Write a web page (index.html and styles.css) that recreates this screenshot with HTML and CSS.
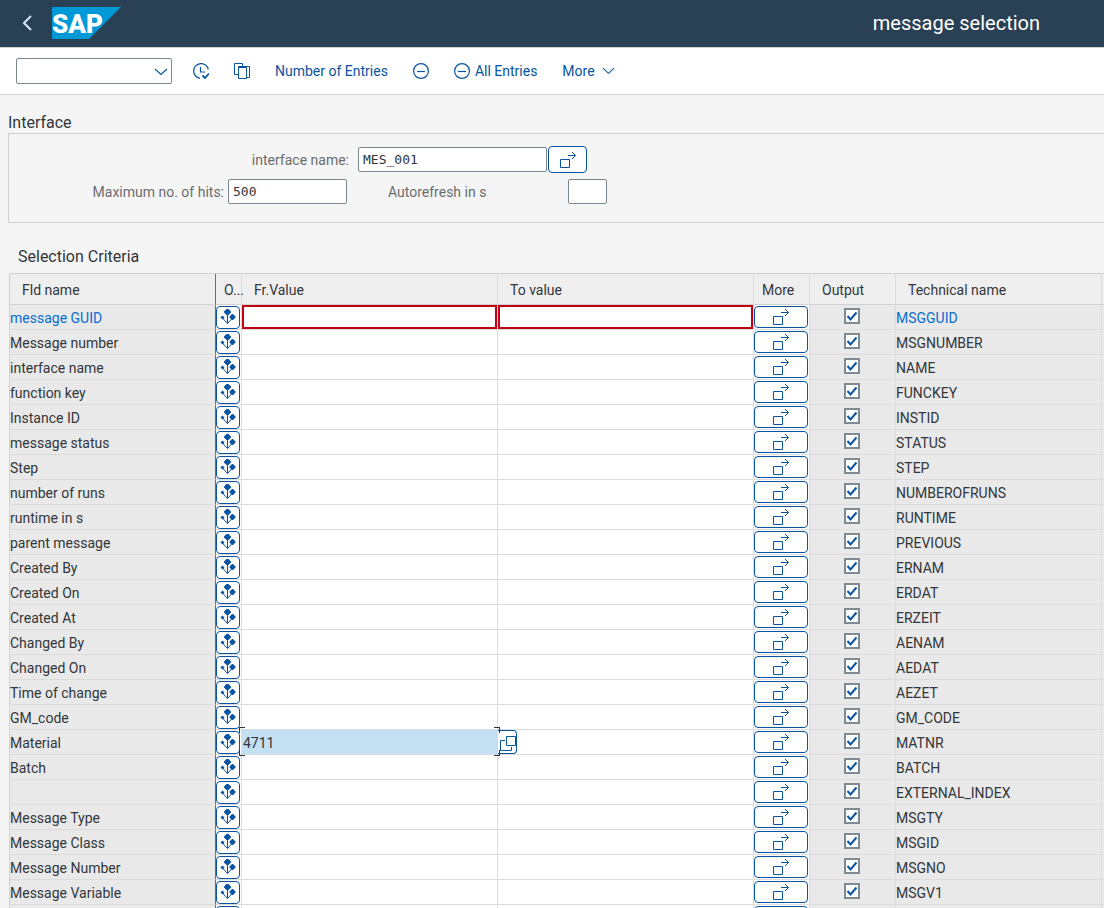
FILE: index.html
```html
<!DOCTYPE html>
<html lang="en">
<head>
    <meta charset="UTF-8">
    <meta name="viewport" content="width=device-width, initial-scale=1.0">
    <title>message selection</title>
    <link rel="stylesheet" href="styles.css">
</head>
<body>

    <!-- Shared icons -->
    <svg class="sprite" aria-hidden="true">
        <symbol id="icon-option" viewBox="0 0 16 16">
            <path d="M7.5 4v10.500M7.500 14.500L2.500 9M7.500 14.500l5-5.500" fill="none" stroke="currentColor"/>
            <path d="M6.500 0h2L11 2.500v1L8.500 6h-2L4 3.500v-1zM12 5h1l2.500 2.500v1L13 11h-1L9.500 8.500v-1zM2.500 6.500L4.500 8.500 2.500 10.500 .500 8.500z" fill="currentColor"/>
        </symbol>
        <symbol id="icon-multi" viewBox="0 0 18 18">
            <path d="M1.500 8.500h9v8h-9zM9 4.500h7.500M13 1l3.500 3.500L13 8" fill="none" stroke="currentColor"/>
        </symbol>
        <symbol id="icon-minus" viewBox="0 0 16 16">
            <circle cx="8" cy="8" r="7.400" fill="none" stroke="currentColor" stroke-width="1.200"/>
            <path d="M4 8.500h8" stroke="currentColor" stroke-width="1.200"/>
        </symbol>
        <symbol id="icon-down" viewBox="0 0 14 8">
            <path d="M1 1l6 5.500L13 1" fill="none" stroke="currentColor" stroke-width="1.100"/>
        </symbol>
    </svg>

    <!-- Shell Header -->
    <header class="shell">
        <button class="back-btn" aria-label="Back">
            <svg width="10" height="16" viewBox="0 0 10 16"><path d="M9 1L2 8l7 7" fill="none" stroke="currentColor" stroke-width="2"/></svg>
        </button>
        <svg class="logo" width="69" height="32" viewBox="0 0 69 32" role="img" aria-label="SAP">
            <path d="M0 0h69L37 32H0z" fill="#0099d8"/>
            <text class="logo-text" x="0" y="26">SAP</text>
        </svg>
        <h1>message selection</h1>
    </header>

    <!-- Toolbar -->
    <div class="toolbar">
        <div class="command">
            <select aria-label="Command"><option></option></select>
            <svg class="command-arrow" width="14" height="8"><use href="#icon-down"/></svg>
        </div>
        <button class="tool" aria-label="Execute">
            <svg width="16" height="16" viewBox="0 0 16 16" fill="none" stroke="currentColor" stroke-width="1.200">
                <path d="M15.300 6.500A7.400 7.400 0 1 0 7 15.300M7.500 4v5H12"/>
                <path d="M9.500 12.500l2.500 2.500 4-4.500" stroke-width="1.800"/>
            </svg>
        </button>
        <button class="tool" aria-label="Get Variant">
            <svg width="16" height="16" viewBox="0 0 16 16" fill="none" stroke="currentColor">
                <path d="M4 11.500H.500v-11h8V3M4.500 14.500V3.500h11v11H12"/>
                <path d="M4.500 4.500h8v11h-8z"/>
            </svg>
        </button>
        <button class="tool">Number of Entries</button>
        <button class="tool" aria-label="Collapse"><svg width="16" height="16"><use href="#icon-minus"/></svg></button>
        <button class="tool"><svg width="16" height="16"><use href="#icon-minus"/></svg>All Entries</button>
        <button class="tool">More<svg class="more-arrow" width="13" height="8"><use href="#icon-down"/></svg></button>
    </div>

    <main>
        <!-- Interface -->
        <section class="interface">
            <h2>Interface</h2>
            <div class="box">
                <div class="line">
                    <label class="label-name" for="iface">interface name:</label>
                    <input class="field-name" id="iface" type="text" value="MES_001">
                    <button class="btn pick" aria-label="Multiple selection"><svg width="18" height="18"><use href="#icon-multi"/></svg></button>
                </div>
                <div class="line">
                    <label class="label-hits" for="hits">Maximum no. of hits:</label>
                    <input class="field-hits" id="hits" type="text" value="500">
                    <label class="label-refresh" for="refresh">Autorefresh in s</label>
                    <input class="field-refresh" id="refresh" type="text">
                </div>
            </div>
        </section>

        <!-- Selection Criteria -->
        <section class="criteria">
            <h2>Selection Criteria</h2>
            <table>
                <colgroup>
                    <col class="col-name">
                    <col class="col-option">
                    <col>
                    <col>
                    <col class="col-more">
                    <col class="col-output">
                    <col class="col-tech">
                    <col class="col-end">
                </colgroup>
                <thead>
                    <tr>
                        <th>Fld name</th>
                        <th class="narrow">O...</th>
                        <th>Fr.Value</th>
                        <th>To value</th>
                        <th class="narrow">More</th>
                        <th>Output</th>
                        <th>Technical name</th>
                        <th></th>
                    </tr>
                </thead>
                <tbody id="rows"></tbody>
            </table>
        </section>
    </main>

    <script src="script.js"></script>
</body>
</html>
```

FILE: styles.css
```css
/* Global Styles */
* {
    margin: 0;
    padding: 0;
    box-sizing: border-box;
}

body {
    display: flex;
    flex-direction: column;
    height: 100vh;
    overflow: hidden;
    background: #f5f5f5;
    color: #32363a;
    font-family: Roboto, sans-serif;
    font-size: 14px;
}

button,
input,
select {
    font: inherit;
    color: inherit;
}

button {
    cursor: pointer;
}

.sprite {
    position: absolute;
    width: 0;
    height: 0;
}

/* Shell Header */
.shell {
    display: flex;
    flex: none;
    align-items: center;
    height: 48px;
    padding: 0 64px 2px 15px;
    background: #2a4054;
    border-bottom: 1px solid #d0d2d4;
    color: #fff;
}

.shell h1 {
    margin-left: auto;
    font-size: 20px;
    font-weight: normal;
}

.back-btn {
    display: flex;
    justify-content: center;
    width: 24px;
    margin-right: 13px;
    background: none;
    border: none;
    color: #d1e8ff;
}

.logo-text {
    fill: #fff;
    font-family: Roboto, sans-serif;
    font-size: 26px;
    font-weight: 900;
}

/* Toolbar */
.toolbar {
    display: flex;
    flex: none;
    align-items: center;
    gap: 25px;
    height: 47px;
    padding: 0 16px;
    background: #fff;
    border-bottom: 1px solid #d1d1d1;
    color: #0854a0;
}

.command {
    position: relative;
    margin-right: -4px;
}

.command select {
    display: block;
    width: 156px;
    height: 26px;
    appearance: none;
    background: #fff;
    border: 1px solid #7b868f;
    border-radius: 2px;
}

.command-arrow {
    position: absolute;
    top: 10px;
    right: 4px;
    pointer-events: none;
}

.tool {
    display: flex;
    align-items: center;
    gap: 5px;
    background: none;
    border: none;
}

.more-arrow {
    margin-left: 2px;
}

/* Interface */
main {
    flex: 1;
    min-height: 0;
    padding-top: 17px;
    overflow: hidden;
}

h2 {
    font-size: 16px;
    font-weight: normal;
    line-height: 21px;
}

.interface {
    padding-left: 8px;
}

.box {
    display: flex;
    flex-direction: column;
    gap: 6px;
    height: 90px;
    padding-top: 12px;
    border: 1px solid #d1d1d1;
    border-right: none;
}

.line {
    display: flex;
    align-items: center;
    color: #6a6d70;
}

.line input {
    height: 25px;
    padding: 0 4px;
    background: #fff;
    border: 1px solid #7b868f;
    border-radius: 2px;
    color: #32363a;
    font-family: "DejaVu Sans Mono", monospace;
    font-size: 13px;
}

.label-name,
.label-hits {
    text-align: right;
}

.label-name {
    width: 340px;
    margin-right: 9px;
}

.label-hits {
    width: 215px;
    margin-right: 4px;
}

.label-refresh {
    width: 180px;
    margin-left: 41px;
}

.field-name {
    width: 189px;
    margin-right: 1px;
}

.field-hits {
    width: 119px;
}

.field-refresh {
    width: 39px;
}

/* Outlined Buttons */
.btn {
    display: flex;
    align-items: center;
    justify-content: center;
    background: #fff;
    border: 1px solid #0854a0;
    border-radius: 4px;
    color: #0854a0;
}

.pick {
    width: 39px;
    height: 27px;
}

/* Selection Criteria */
.criteria {
    padding: 23px 0 0 9px;
}

.criteria h2 {
    padding: 0 0 6px 9px;
}

table {
    width: 100%;
    table-layout: fixed;
    border-collapse: separate;
    border-spacing: 0;
    border-top: 1px solid #d1d1d1;
    border-left: 1px solid #d1d1d1;
}

.col-name,
.col-tech {
    width: 206px;
}

.col-option {
    width: 26px;
}

.col-more {
    width: 56px;
}

.col-output {
    width: 86px;
}

.col-end {
    width: 2px;
}

th {
    height: 31px;
    padding: 1px 12px 0;
    background: #efefef;
    border-right: 1px solid #dcdcdc;
    border-bottom: 1px solid #d1d1d1;
    font-weight: normal;
    text-align: left;
    white-space: nowrap;
}

th.narrow {
    padding: 1px 0 0 8px;
}

td {
    position: relative;
    height: 25px;
    background: #fff;
    border-right: 1px solid #dcdcdc;
    border-bottom: 1px solid #dcdcdc;
    white-space: nowrap;
}

th:first-child,
td:first-child {
    border-right-color: #6a6d70;
}

th:last-child,
td:last-child {
    border-right: none;
}

td.text,
td.output,
td.end {
    background: #e9e9e9;
}

td.text {
    padding-top: 1px;
}

tr.active td.text {
    color: #0a6ed1;
}

.option-btn {
    width: 24px;
    height: 23px;
}

.more-btn {
    width: 54px;
    height: 22px;
}

.value {
    display: block;
    width: 100%;
    height: 24px;
    padding: 1px 1px 0;
    background: transparent;
    border: none;
    outline: none;
}

tr.active .value {
    border: 2px solid #c00013;
}

/* Selected value with its corner brackets */
td.selected {
    z-index: 1;
    background: #c4e1f3;
    border-right-color: #c4e1f3;
}

.brackets {
    position: absolute;
    top: -3px;
    right: -3px;
    bottom: -2px;
    left: -3px;
    border: 1px solid #32363a;
    border-width: 0 1px;
    pointer-events: none;
    clip-path: polygon(0 0, 100% 0, 100% 6px, 0 6px, 0 calc(100% - 6px), 100% calc(100% - 6px), 100% 100%, 0 100%);
}

.brackets::before,
.brackets::after {
    content: "";
    position: absolute;
    top: 0;
    bottom: 0;
    width: 5px;
    border: 1px solid #32363a;
    border-width: 1px 0;
}

.brackets::before {
    left: 0;
}

.brackets::after {
    right: 0;
}

.help-btn {
    position: absolute;
    top: 0;
    left: 0;
    width: 19px;
    height: 24px;
    border-left: none;
    border-radius: 0 4px 4px 0;
}

/* Output tick boxes */
td.output {
    padding-right: 2px;
}

.output input {
    display: block;
    width: 16px;
    height: 16px;
    margin: -2px auto 0;
    appearance: none;
    background: #fff;
    border: 2px solid #7f8b93;
}

.output label {
    position: relative;
    display: block;
}

.output svg {
    position: absolute;
    top: 2px;
    left: calc(50% - 6px);
    color: #0854a0;
    visibility: hidden;
    pointer-events: none;
}

.output input:checked + svg {
    visibility: visible;
}
```

FILE: script.js
```js
// [field name, technical name, from value]
const fields = [
    ["message GUID", "MSGGUID"],
    ["Message number", "MSGNUMBER"],
    ["interface name", "NAME"],
    ["function key", "FUNCKEY"],
    ["Instance ID", "INSTID"],
    ["message status", "STATUS"],
    ["Step", "STEP"],
    ["number of runs", "NUMBEROFRUNS"],
    ["runtime in s", "RUNTIME"],
    ["parent message", "PREVIOUS"],
    ["Created By", "ERNAM"],
    ["Created On", "ERDAT"],
    ["Created At", "ERZEIT"],
    ["Changed By", "AENAM"],
    ["Changed On", "AEDAT"],
    ["Time of change", "AEZET"],
    ["GM_code", "GM_CODE"],
    ["Material", "MATNR", "4711"],
    ["Batch", "BATCH"],
    ["", "EXTERNAL_INDEX"],
    ["Message Type", "MSGTY"],
    ["Message Class", "MSGID"],
    ["Message Number", "MSGNO"],
    ["Message Variable", "MSGV1"],
    ["", ""]
];

const helpButton = `
    <button class="btn help-btn" aria-label="Value help">
        <svg width="17" height="18" viewBox="0 0 17 18" fill="none" stroke="currentColor">
            <path d="M7.500 3.500h9v9h-9z"/>
            <path d="M6 7.500H1.500v10h11V14"/>
        </svg>
    </button>`;

document.getElementById("rows").innerHTML = fields.map(([name, tech, from], i) => `
    <tr class="${i === 0 ? "active" : ""}">
        <td class="text">${name}</td>
        <td><button class="btn option-btn" aria-label="Option ${tech}"><svg width="16" height="16"><use href="#icon-option"/></svg></button></td>
        <td class="${from ? "selected" : ""}">
            <input class="value" type="text" aria-label="From ${tech}" value="${from || ""}">
            ${from ? '<span class="brackets"></span>' : ""}
        </td>
        <td>
            <input class="value" type="text" aria-label="To ${tech}">
            ${from ? helpButton : ""}
        </td>
        <td><button class="btn more-btn" aria-label="More ${tech}"><svg width="18" height="18"><use href="#icon-multi"/></svg></button></td>
        <td class="output">
            <label>
                <input type="checkbox" aria-label="Output ${tech}" checked>
                <svg width="12" height="12" viewBox="0 0 12 12"><path d="M1.500 6L4.500 9.500 10.500 2.500" fill="none" stroke="currentColor" stroke-width="2"/></svg>
            </label>
        </td>
        <td class="text">${tech}</td>
        <td class="end"></td>
    </tr>`).join("");
```
